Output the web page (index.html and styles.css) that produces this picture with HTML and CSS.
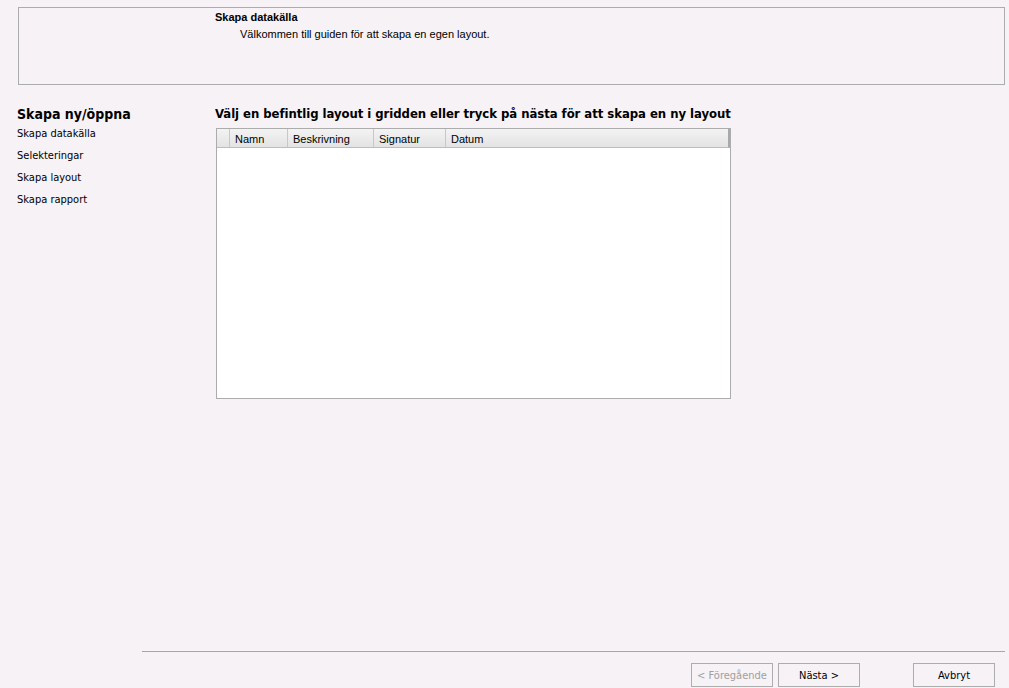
FILE: index.html
```html
<!DOCTYPE html>
<html lang="sv">

<head>
    <meta charset="UTF-8">
    <title>Skapa datakälla</title>
    <link rel="stylesheet" href="styles.css">
</head>

<body>
    <div class="banner">
        <div class="banner-title">Skapa datakälla</div>
        <div class="banner-text">Välkommen till guiden för att skapa en egen layout.</div>
    </div>

    <div class="main">
        <nav class="steps">
            <div class="steps-title">Skapa ny/öppna</div>
            <div class="step">Skapa datakälla</div>
            <div class="step">Selekteringar</div>
            <div class="step">Skapa layout</div>
            <div class="step">Skapa rapport</div>
        </nav>

        <section class="content">
            <h2>Välj en befintlig layout i gridden eller tryck på nästa för att skapa en ny layout</h2>
            <div class="grid">
                <div class="grid-head">
                    <div class="col col-row"></div>
                    <div class="col col-name">Namn</div>
                    <div class="col col-desc">Beskrivning</div>
                    <div class="col col-sign">Signatur</div>
                    <div class="col col-date">Datum</div>
                </div>
                <div class="grid-body"></div>
            </div>
        </section>
    </div>

    <footer class="footer">
        <div class="buttons">
            <button type="button" disabled>&lt; Föregående</button>
            <button type="button">Nästa &gt;</button>
            <button type="button" class="cancel">Avbryt</button>
        </div>
    </footer>
</body>

</html>
```

FILE: styles.css
```css
/* General styles */

* {
    box-sizing: border-box;
}

body {
    margin: 0;
    height: 688px;
    display: flex;
    flex-direction: column;
    background-color: #f6f2f6;
    font-family: "Liberation Sans", Arial, sans-serif;
    font-size: 11px;
    color: #000;
}

/* Top banner */

.banner {
    margin: 7px 4px 0 18px;
    height: 78px;
    border: 1px solid #acacac;
    padding: 3px 0 0 196px;
}

.banner-title {
    font-weight: bold;
    font-size: 11px;
    line-height: 13px;
}

.banner-text {
    padding-left: 25px;
    margin-top: 4px;
    line-height: 13px;
}

/* Steps + grid */

.main {
    flex: 1;
    display: flex;
    padding-top: 20px;
}

.steps {
    width: 216px;
    padding-left: 17px;
    font-family: "DejaVu Sans Condensed", "DejaVu Sans", sans-serif;
}

.steps-title {
    font-weight: bold;
    font-size: 14px;
    line-height: 18px;
}

.step {
    font-size: 11px;
    line-height: 22px;
}

.content {
    width: 515px;
}

h2 {
    margin: 0 0 5px -1px;
    font-family: "DejaVu Sans Condensed", "DejaVu Sans", sans-serif;
    font-size: 13px;
    line-height: 18px;
    letter-spacing: -0.05px;
    white-space: nowrap;
}

.grid {
    height: 271px;
    border: 1px solid #acacac;
    background-color: #fff;
    display: flex;
    flex-direction: column;
}

.grid-head {
    display: flex;
    height: 19px;
    background: linear-gradient(#f3f3f3, #e3e3e3);
    border-bottom: 1px solid #bdbdbd;
    border-right: 2px solid #a8a8a8;
}

.col {
    border-right: 1px solid #c8c8c8;
    padding: 4px 0 0 5px;
    line-height: 13px;
}

.col-row {
    width: 13px;
}

.col-name {
    width: 58px;
}

.col-desc {
    width: 86px;
}

.col-sign {
    width: 72px;
}

.col-date {
    flex: 1;
    border-right: none;
}

.grid-body {
    flex: 1;
}

/* Footer */

.footer {
    margin: 0 4px 0 142px;
    border-top: 1px solid #a6a6a6;
    padding: 11px 10px 1px 0;
}

.buttons {
    display: flex;
    justify-content: flex-end;
}

button {
    width: 82px;
    height: 24px;
    border: 1px solid #adadad;
    background-color: #f6f2f6;
    font-family: "DejaVu Sans Condensed", "DejaVu Sans", sans-serif;
    font-size: 11px;
    color: #000;
    padding: 0;
    margin-left: 5px;
}

button:disabled {
    color: #a0a0a0;
}

button.cancel {
    margin-left: 53px;
}
```
